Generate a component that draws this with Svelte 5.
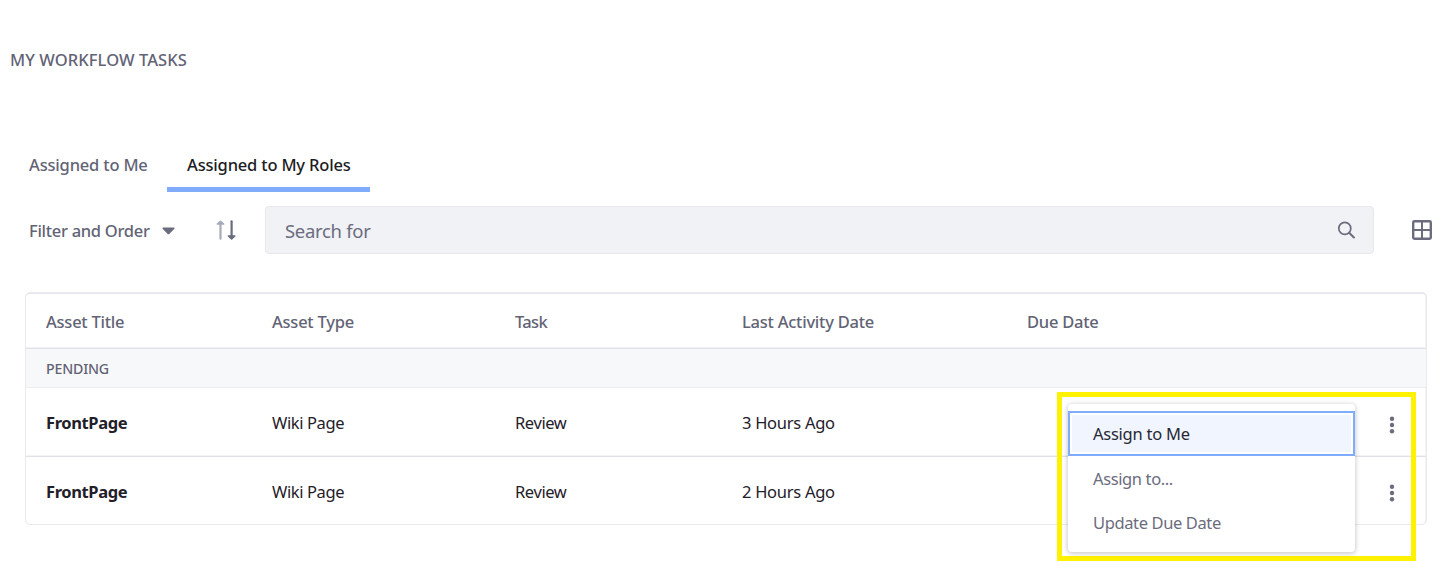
<script>
  const columns = ['Asset Title', 'Asset Type', 'Task', 'Last Activity Date', 'Due Date'];
  const rows = [
    { title: 'FrontPage', type: 'Wiki Page', task: 'Review', activity: '3 Hours Ago' },
    { title: 'FrontPage', type: 'Wiki Page', task: 'Review', activity: '2 Hours Ago' }
  ];
  const actions = ['Assign to Me', 'Assign to...', 'Update Due Date'];
</script>

<main>
  <h1><span>MY WORKFLOW TASKS</span></h1>

  <nav class="tabs">
    <button class="tab"><span>Assigned to Me</span></button>
    <button class="tab active"><span>Assigned to My Roles</span></button>
  </nav>

  <div class="toolbar">
    <button class="filter">
      <span>Filter and Order</span>
      <svg width="13" height="8" viewBox="0 0 13 8"><path d="M1 .5h11q1 .4.4 1.2L7.3 7q-.8.7-1.6 0L.6 1.7Q0 .9 1 .5z" fill="#6b6c7e" /></svg>
    </button>
    <button class="sort" aria-label="Sort">
      <svg width="20" height="20" viewBox="0 0 20 20" fill="none" stroke-linecap="round" stroke-linejoin="round">
        <path d="M4.5 18.7V2.2" stroke="#a7a9bc" stroke-width="2.2" />
        <path d="M1.3 4 4.5 1.2 7.7 4z" stroke="#a7a9bc" fill="#a7a9bc" stroke-width="1.4" />
        <path d="M15.6 1.3v16.5" stroke="#6b6c7e" stroke-width="2.2" />
        <path d="M12.4 16 15.6 18.8 18.8 16z" stroke="#6b6c7e" fill="#6b6c7e" stroke-width="1.6" />
      </svg>
    </button>
    <div class="search">
      <span>Search for</span>
      <svg width="18" height="18" viewBox="0 0 18 18" fill="none" stroke="#6b6c7e" stroke-linecap="round">
        <circle cx="7.8" cy="7.4" r="6" stroke-width="1.7" />
        <path d="m12.2 11.8 4.7 4.7" stroke-width="2" />
      </svg>
    </div>
    <button class="view" aria-label="View">
      <svg width="20" height="20" viewBox="0 0 20 20" fill="none" stroke="#6b6c7e">
        <rect x="1.2" y="1.2" width="17.6" height="17.6" rx="1.2" stroke-width="2.4" />
        <path d="M10 1v18M1 10h18" stroke-width="2" />
      </svg>
    </button>
  </div>

  <section class="table">
    <div class="row head">
      {#each columns as c, i}<div class:task={i === 2}><span>{c}</span></div>{/each}
    </div>
    <div class="group"><span>PENDING</span></div>
    {#each rows as r}
      <div class="row item">
        <div><b>{r.title}</b></div>
        <div><span>{r.type}</span></div>
        <div><span>{r.task}</span></div>
        <div><span class="ago">{r.activity}</span></div>
        <div></div>
        <button class="more" aria-label="Actions">
          <svg width="6" height="18" viewBox="0 0 6 18" fill="#6b6c7e"><circle cx="3" cy="2.7" r="2.2" /><circle cx="3" cy="9" r="2.2" /><circle cx="3" cy="15.3" r="2.2" /></svg>
        </button>
      </div>
    {/each}
  </section>

  <div class="highlight">
    <div class="menu">
      {#each actions as a, i}
        <button class="action" class:focused={i === 0}><span>{a}</span></button>
      {/each}
    </div>
  </div>
</main>

<style>
  :global(body) { margin: 0; background: #fff; overflow: hidden; }
  main {
    position: relative; box-sizing: border-box; width: 1447px; height: 571px; overflow: hidden;
    font: 400 16.5px/24px "Segoe UI", "Noto Sans", "Open Sans", sans-serif; color: #1f202a;
  }
  button { font: inherit; color: inherit; letter-spacing: inherit; background: none; border: 0; padding: 0; margin: 0; text-align: left; }
  svg { display: block; flex: none; }
  span, b { white-space: nowrap; }
  h1 { margin: 0; padding: 48px 0 0 10px; height: 24px; font-size: 16.5px; font-weight: 500; color: #626375; letter-spacing: .08px; }
  .tabs { display: flex; margin-top: 68px; padding-left: 10px; height: 52px; font-weight: 500; color: #626375; letter-spacing: -.18px; }
  .tab { box-sizing: border-box; width: 157px; padding: 13px 0 0 19px; display: flex; align-items: flex-start; }
  .tab.active { width: 203px; padding-left: 20px; color: #1c1c24; border-bottom: 5px solid #80acff; }
  .toolbar { display: flex; align-items: center; height: 48px; margin-top: 14px; padding-left: 29px; }
  .filter { display: flex; align-items: center; width: 187px; font-weight: 500; color: #626375; letter-spacing: -.29px; }
  .filter span { width: 133px; padding-top: 2px; }
  .filter svg { margin-top: 2px; }
  .sort { width: 49px; }
  .search {
    box-sizing: border-box; width: 1109px; height: 48px; border: 1px solid #e7e7ed; border-radius: 4px; background: #f1f2f5;
    padding: 0 18px 0 19px; display: flex; align-items: center; justify-content: space-between; font-size: 18.5px; letter-spacing: -.3px; color: #6b6c7e;
  }
  .search span { padding-top: 2px; }
  .view { margin-left: 38px; }
  .table { box-sizing: border-box; margin: 38px 0 0 25px; width: 1402px; height: 233px; border: 1px solid #e9e9ee; border-radius: 5px; box-shadow: inset 0 1px #e7e7ed, inset -1px 0 #f3f3f6; }
  .row { display: grid; grid-template-columns: 226px 243px 227px 285px 334px 1fr; align-items: center; padding-left: 20px; box-sizing: border-box; }
  .head { height: 56px; padding-top: 2px; font-weight: 500; color: #626375; letter-spacing: -.24px; border-bottom: 1px solid #e1e1e9; box-shadow: inset 0 -1px #f1f1f5; }
  .task { letter-spacing: -.65px; }
  .group { height: 38px; border-bottom: 1px solid #edeef3; background: #f7f8f9; padding-left: 20px; line-height: 39px; font-size: 14.2px; font-weight: 500; color: #626375; letter-spacing: -.2px; }
  .item { height: 69px; padding-top: 2px; border-bottom: 1px solid #e1e1e9; letter-spacing: -.4px; box-shadow: inset 0 -1px #f3f3f6; }
  .item:last-child { border-bottom: 0; padding-top: 0; box-shadow: none; }
  .item b { font-weight: 700; }
  .ago { letter-spacing: -.28px; }
  .more { padding-left: 28px; padding-top: 3px; }
  .highlight { position: absolute; left: 1057px; top: 392px; box-sizing: border-box; width: 359px; height: 169px; border: 5px solid #fff200; padding: 7px 0 0 6px; }
  .menu { box-sizing: border-box; width: 287px; height: 148px; padding-top: 7px; background: #fff; border-radius: 4px; box-shadow: 0 1px 4px 1px rgba(39, 40, 51, .22); color: #6b6c7e; letter-spacing: -.38px; }
  .action { display: flex; align-items: center; box-sizing: border-box; width: 287px; height: 44px; padding: 2px 0 0 25px; }
  .focused { height: 45px; padding-top: 1px; letter-spacing: -.25px; background: #f0f5ff; color: #272833; box-shadow: inset 0 0 0 2px #80acff, inset 0 0 0 4px #fff; }
</style>
